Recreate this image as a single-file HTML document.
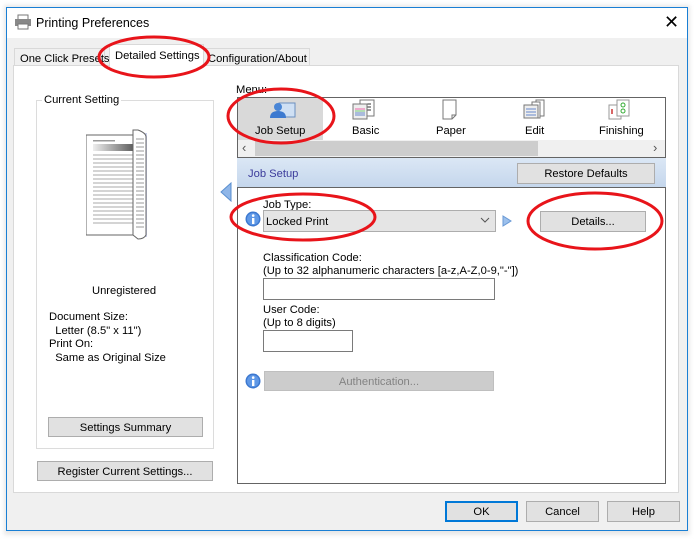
<!DOCTYPE html>
<html><head><meta charset="utf-8"><style>
*{box-sizing:border-box;margin:0;padding:0}
body{width:696px;height:539px;background:#fff;position:relative;overflow:hidden;font-family:"Liberation Sans",sans-serif;font-size:11.2px;color:#000}
.a{position:absolute}
.btn{position:absolute;background:#e1e1e1;border:1px solid #adadad;text-align:center;line-height:19px}
.t{position:absolute;white-space:nowrap;margin-top:2px}
</style></head><body>
<div class="a" style="left:4px;top:5px;width:686px;height:530px;background:#e8e8e8;filter:blur(2px)"></div>
<div class="a" style="left:6px;top:7px;width:682px;height:524px;background:#f0f0f0;border:1px solid #1a7fd4"></div>
<div class="a" style="left:7px;top:8px;width:680px;height:30px;background:#fff"></div>
<svg class="a" style="left:14px;top:14px" width="18" height="16" viewBox="0 0 18 16"><rect x="4" y="1" width="10" height="5" fill="#fff" stroke="#777"/><rect x="1" y="5" width="16" height="7" fill="#888"/><rect x="4" y="10" width="10" height="5" fill="#fff" stroke="#777"/></svg>
<div class="t" style="left:36px;top:14px;font-size:12.5px">Printing Preferences</div>
<div class="t" style="left:664px;top:10px;font-size:18px;font-weight:300">✕</div>
<div class="a" style="left:14px;top:48px;width:91px;height:18px;background:#f0f0f0;border:1px solid #d9d9d9"></div>
<div class="t" style="left:20px;top:51px">One Click Presets</div>
<div class="a" style="left:202px;top:48px;width:108px;height:18px;background:#f0f0f0;border:1px solid #d9d9d9"></div>
<div class="t" style="left:208px;top:51px">Configuration/About</div>
<div class="a" style="left:13px;top:65px;width:666px;height:428px;background:#fff;border:1px solid #d9d9d9"></div>
<div class="a" style="left:109px;top:44px;width:95px;height:23px;background:#fff;border:1px solid #d9d9d9;border-bottom:none"></div>
<div class="t" style="left:115px;top:48px">Detailed Settings</div>
<div class="a" style="left:36px;top:100px;width:178px;height:349px;border:1px solid #dcdcdc"></div>
<div class="t" style="left:42px;top:92px;background:#fff;padding:0 2px">Current Setting</div>
<svg class="a" style="left:86px;top:129px" width="66" height="113" viewBox="0 0 66 113">
<rect x="0" y="6" width="50" height="100" fill="#fff" stroke="#666"/>
<rect x="7" y="11" width="22" height="1.5" fill="#999"/>
<defs><linearGradient id="g"><stop offset="0" stop-color="#eee"/><stop offset="1" stop-color="#555"/></linearGradient></defs>
<rect x="7" y="15" width="43" height="7" fill="url(#g)"/>
<g stroke="#aaa"><line x1="7" y1="26" x2="48" y2="26"/><line x1="7" y1="30" x2="48" y2="30"/><line x1="7" y1="34" x2="48" y2="34"/><line x1="7" y1="38" x2="48" y2="38"/><line x1="7" y1="42" x2="48" y2="42"/><line x1="7" y1="46" x2="48" y2="46"/><line x1="7" y1="50" x2="48" y2="50"/><line x1="7" y1="54" x2="48" y2="54"/><line x1="7" y1="58" x2="48" y2="58"/><line x1="7" y1="62" x2="48" y2="62"/><line x1="7" y1="66" x2="48" y2="66"/><line x1="7" y1="70" x2="48" y2="70"/><line x1="7" y1="74" x2="48" y2="74"/><line x1="7" y1="78" x2="48" y2="78"/><line x1="7" y1="82" x2="48" y2="82"/><line x1="7" y1="86" x2="48" y2="86"/><line x1="7" y1="90" x2="48" y2="90"/><line x1="7" y1="94" x2="48" y2="94"/></g>
<rect x="52" y="4" width="9" height="104" fill="#c9cfe8"/>
<path d="M47 1 L52 1 Q60 4 60 8 L60 106 Q58 110 52 110 L47 106 Z" fill="#fff" stroke="#666"/>
<g stroke="#999"><path d="M50 10h8M50 14h8M50 18h8M50 22h8M50 26h8M50 30h8M50 34h8M50 38h8M50 42h8M50 46h8M50 50h8M50 54h8M50 58h8M50 62h8M50 66h8M50 70h8M50 74h8M50 78h8M50 82h8M50 86h8M50 90h8M50 94h8M50 98h8"/></g>
</svg>
<div class="t" style="left:92px;top:283px">Unregistered</div>
<div class="t" style="left:49px;top:309px;line-height:13.5px">Document Size:<br>&nbsp;&nbsp;Letter (8.5" x 11")<br>Print On:<br>&nbsp;&nbsp;Same as Original Size</div>
<div class="btn" style="left:48px;top:417px;width:155px;height:20px;padding-top:1px">Settings Summary</div>
<div class="btn" style="left:37px;top:461px;width:176px;height:20px;padding-top:1px">Register Current Settings...</div>
<svg class="a" style="left:220px;top:182px" width="12" height="20"><path d="M11 1 L1 10 L11 19 Z" fill="#8fb6e8" stroke="#5a8fd0"/></svg>
<div class="t" style="left:236px;top:82px">Menu:</div>
<div class="a" style="left:237px;top:97px;width:429px;height:61px;border:1px solid #646464;background:#fff"></div>
<div class="a" style="left:238px;top:98px;width:85px;height:42px;background:#d9d9d9"></div>
<svg class="a" style="left:267px;top:100px" width="30" height="20"><rect x="12" y="3" width="16" height="14" fill="#cfe0f4" stroke="#6b8fbf"/><circle cx="11" cy="7" r="4" fill="#4a86d6"/><path d="M3 18 Q3 11 11 11 Q19 11 19 18 Z" fill="#3d7ad0"/></svg>
<div class="t" style="left:255px;top:123px">Job Setup</div>
<svg class="a" style="left:351px;top:99px" width="26" height="22"><rect x="9" y="1" width="14" height="16" fill="#fff" stroke="#777"/><path d="M12 5h8M12 8h8M12 11h8" stroke="#333"/><rect x="2" y="5" width="14" height="15" fill="#eee" stroke="#777"/><path d="M4 10h10" stroke="#e6a"/><path d="M4 12h10" stroke="#7c7"/><path d="M4 14h10M4 16h10" stroke="#68c"/></svg>
<div class="t" style="left:352px;top:123px">Basic</div>
<svg class="a" style="left:442px;top:99px" width="16" height="22"><path d="M1 1h13v15l-4 4H1z" fill="#fff" stroke="#777"/><path d="M10 20v-4h4" fill="none" stroke="#777"/></svg>
<div class="t" style="left:436px;top:123px">Paper</div>
<svg class="a" style="left:522px;top:99px" width="26" height="22"><rect x="14" y="1" width="8" height="16" fill="#fff" stroke="#777"/><rect x="10" y="3" width="8" height="16" fill="#fff" stroke="#777"/><rect x="2" y="6" width="14" height="13" fill="#eee" stroke="#777"/><path d="M4 10h10M4 13h10M4 16h10" stroke="#68c"/></svg>
<div class="t" style="left:525px;top:123px">Edit</div>
<svg class="a" style="left:608px;top:99px" width="24" height="22"><rect x="1" y="6" width="12" height="14" fill="#fff" stroke="#999"/><rect x="9" y="1" width="12" height="16" fill="#fff" stroke="#999"/><path d="M4 10v5" stroke="#c33" stroke-width="1.5"/><circle cx="15" cy="6" r="2" fill="none" stroke="#3a3"/><circle cx="15" cy="12" r="2" fill="none" stroke="#3a3"/></svg>
<div class="t" style="left:599px;top:123px">Finishing</div>
<div class="a" style="left:238px;top:140px;width:427px;height:17px;background:#f0f0f0"></div>
<div class="a" style="left:255px;top:141px;width:283px;height:15px;background:#cdcdcd"></div>
<div class="t" style="left:242px;top:138px;font-size:13px;color:#555">‹</div>
<div class="t" style="left:653px;top:138px;font-size:13px;color:#555">›</div>
<div class="a" style="left:237px;top:158px;width:429px;height:30px;background:linear-gradient(#dbe7f5,#c4d6ec)"></div>
<div class="t" style="left:248px;top:166px;color:#3b3b9b">Job Setup</div>
<div class="btn" style="left:517px;top:163px;width:138px;height:21px;padding-top:1px">Restore Defaults</div>
<div class="a" style="left:237px;top:187px;width:429px;height:297px;border:1px solid #646464;background:#fff"></div>
<div class="t" style="left:263px;top:197px">Job Type:</div>
<svg class="a" style="left:245px;top:211px" width="16" height="16"><circle cx="8" cy="8" r="7.5" fill="#3c78d0"/><circle cx="8" cy="8" r="6" fill="#5f98e6"/><rect x="7" y="7" width="2.4" height="6" fill="#fff"/><circle cx="8.2" cy="4.6" r="1.3" fill="#fff"/></svg>
<div class="a" style="left:263px;top:210px;width:233px;height:22px;background:#e5e5e5;border:1px solid #adadad"></div>
<div class="t" style="left:266px;top:214px">Locked Print</div>
<svg class="a" style="left:480px;top:216px" width="10" height="8"><path d="M1 2l4 4 4-4" fill="none" stroke="#555"/></svg>
<svg class="a" style="left:502px;top:215px" width="10" height="12"><path d="M1 1v10l8-5z" fill="#9cc0ec" stroke="#6a9ad6"/></svg>
<div class="btn" style="left:540px;top:211px;width:106px;height:21px;padding-top:1px">Details...</div>
<div class="t" style="left:263px;top:250px;line-height:13px">Classification Code:<br>(Up to 32 alphanumeric characters [a-z,A-Z,0-9,"-"])</div>
<div class="a" style="left:263px;top:278px;width:232px;height:22px;border:1px solid #7a7a7a"></div>
<div class="t" style="left:263px;top:302px;line-height:13px">User Code:<br>(Up to 8 digits)</div>
<div class="a" style="left:263px;top:330px;width:90px;height:22px;border:1px solid #7a7a7a"></div>
<svg class="a" style="left:245px;top:373px" width="16" height="16"><circle cx="8" cy="8" r="7.5" fill="#3c78d0"/><circle cx="8" cy="8" r="6" fill="#5f98e6"/><rect x="7" y="7" width="2.4" height="6" fill="#fff"/><circle cx="8.2" cy="4.6" r="1.3" fill="#fff"/></svg>
<div class="btn" style="left:264px;top:371px;width:230px;height:20px;padding-top:1px;background:#cccccc;border-color:#bfbfbf;color:#838383">Authentication...</div>
<div class="btn" style="left:445px;top:501px;width:73px;height:21px;border:2px solid #0078d7;line-height:18px">OK</div>
<div class="btn" style="left:526px;top:501px;width:73px;height:21px;padding-top:1px">Cancel</div>
<div class="btn" style="left:607px;top:501px;width:73px;height:21px;padding-top:1px">Help</div>
<svg class="a" style="left:0;top:0" width="696" height="539">
<g fill="none" stroke="#e8141a" stroke-width="3">
<ellipse cx="154" cy="57" rx="55" ry="20"/>
<ellipse cx="281" cy="116" rx="53" ry="27"/>
<ellipse cx="303" cy="217" rx="72" ry="23"/>
<ellipse cx="595" cy="221" rx="67" ry="28"/>
</g></svg>
</body></html>
